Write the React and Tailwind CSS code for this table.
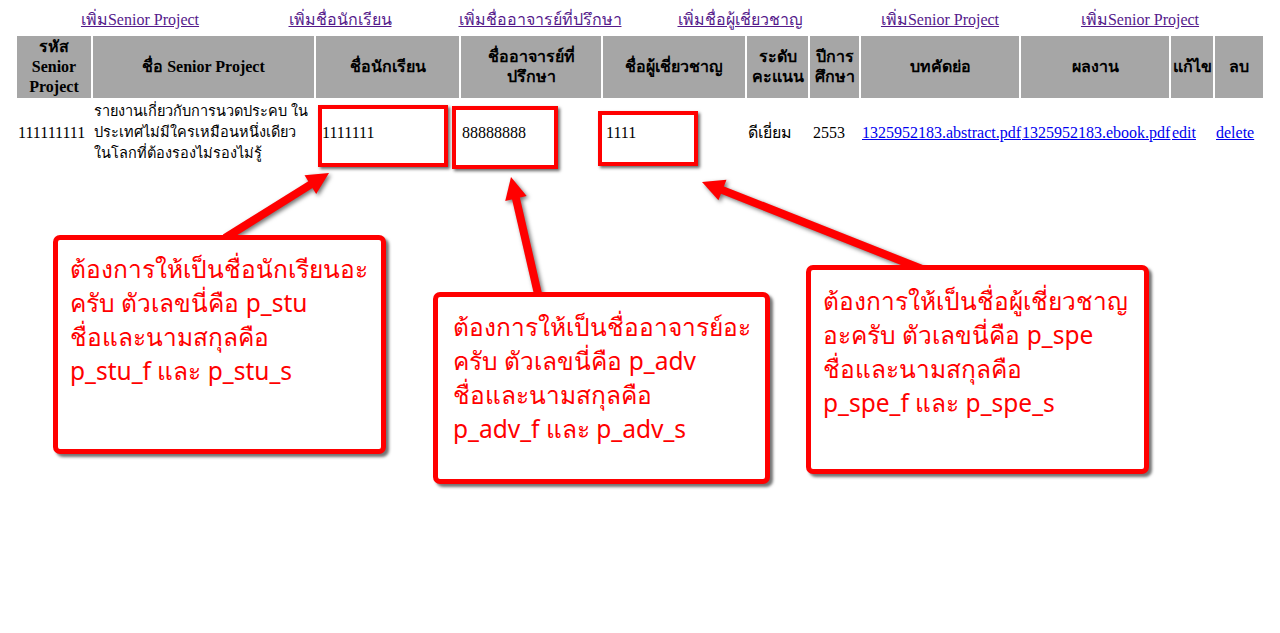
const topLinks = [
  "เพิ่มSenior Project",
  "เพิ่มชื่อนักเรียน",
  "เพิ่มชื่ออาจารย์ที่ปรึกษา",
  "เพิ่มชื่อผู้เชี่ยวชาญ",
  "เพิ่มSenior Project",
  "เพิ่มSenior Project",
];

const columns = [
  { w: "w-[74px]", label: ["รหัส", "Senior", "Project"] },
  { w: "w-[221px]", label: ["ชื่อ Senior Project"] },
  { w: "w-[143px]", label: ["ชื่อนักเรียน"] },
  { w: "w-[140px]", label: ["ชื่ออาจารย์ที่", "ปรึกษา"] },
  { w: "w-[142px]", label: ["ชื่อผู้เชี่ยวชาญ"] },
  { w: "w-[61px]", label: ["ระดับ", "คะแนน"] },
  { w: "w-[49px]", label: ["ปีการ", "ศึกษา"] },
  { w: "w-[158px]", label: ["บทคัดย่อ"] },
  { w: "w-[148px]", label: ["ผลงาน"] },
  { w: "w-[42px]", label: ["แก้ไข"] },
  { w: "w-[48px]", label: ["ลบ"] },
];

// annotation arrow: shaft + triangular head, tip at (x2, y2)
function Arrow({ x1, y1, x2, y2 }) {
  const dx = x2 - x1;
  const dy = y2 - y1;
  const len = Math.hypot(dx, dy);
  const ux = dx / len;
  const uy = dy / len;
  const px = -uy;
  const py = ux;
  const headLen = 22;
  const headW = 11;
  const bx = x2 - ux * headLen;
  const by = y2 - uy * headLen;
  const head = `${x2},${y2} ${bx + px * headW},${by + py * headW} ${bx - px * headW},${by - py * headW}`;
  return (
    <g>
      <line x1={x1} y1={y1} x2={bx + ux * 2} y2={by + uy * 2} stroke="#ff0000" strokeWidth="8" />
      <polygon points={head} fill="#ff0000" />
    </g>
  );
}

function Callout({ className, lines }) {
  return (
    <div className={`absolute rounded-[7px] border-[5px] border-[#ff0000] bg-white shadow-[3px_3px_3px_rgba(0,0,0,0.55)] ${className}`}>
      <div className="text-[24.5px] leading-[34px] text-[#ff0000] font-['Noto_Sans',sans-serif]">
        {lines.map((l, i) => (
          <div key={i} className="whitespace-nowrap">{l}</div>
        ))}
      </div>
    </div>
  );
}

export default function App() {
  return (
    <div className="relative w-[1280px] h-[633px] bg-white text-black text-[16px] font-['Liberation_Serif',serif] overflow-hidden">
      <div className="mx-auto w-[1200px] flex pt-[10px] h-[34px]">
        {topLinks.map((t, i) => (
          <div key={i} className="w-[200px] text-center leading-[20px]">
            <a href="#" className="underline text-[#551a8b]">{t}</a>
          </div>
        ))}
      </div>

      <table className="mx-auto table-fixed border-separate border-spacing-[2px] w-[1250px]">
        <thead>
          <tr>
            {columns.map((c, i) => (
              <th key={i} className={`${c.w} bg-[#a6a6a6] p-[1px] h-[62px] font-bold text-center align-middle leading-[20px]`}>
                {c.label.map((l, j) => (
                  <div key={j}>{l}</div>
                ))}
              </th>
            ))}
          </tr>
        </thead>
        <tbody className="leading-[21px]">
          <tr>
            <td className="p-[1px] pb-[4px] align-middle">111111111</td>
            <td className="p-[1px] pb-[4px] align-middle text-[14.5px] whitespace-nowrap">
              รายงานเกี่ยวกับการนวดประคบ ใน<br />
              ประเทศไม่มีใครเหมือนหนึ่งเดียว<br />
              ในโลกที่ต้องรองไม่รองไม่รู้
            </td>
            <td className="p-[1px] pb-[4px] pl-[6px] align-middle">1111111</td>
            <td className="p-[1px] pb-[4px] align-middle">88888888</td>
            <td className="p-[1px] pb-[4px] pl-[3px] align-middle">1111</td>
            <td className="p-[1px] pb-[4px] align-middle">ดีเยี่ยม</td>
            <td className="p-[1px] pb-[4px] pl-[3px] align-middle">2553</td>
            <td className="p-[1px] pb-[4px] align-middle"><a href="#" className="underline text-[#0000ee]">1325952183.abstract.pdf</a></td>
            <td className="p-[1px] pb-[4px] align-middle"><a href="#" className="underline text-[#0000ee]">1325952183.ebook.pdf</a></td>
            <td className="p-[1px] pb-[4px] align-middle"><a href="#" className="underline text-[#0000ee]">edit</a></td>
            <td className="p-[1px] pb-[4px] align-middle"><a href="#" className="underline text-[#0000ee]">delete</a></td>
          </tr>
        </tbody>
      </table>

      {/* highlight boxes over table cells */}
      <div className="absolute left-[318px] top-[105px] w-[130px] h-[62px] border-4 border-[#ff0000] shadow-[2px_2px_3px_rgba(0,0,0,0.6)]" />
      <div className="absolute left-[452px] top-[106px] w-[106px] h-[63px] border-4 border-[#ff0000] shadow-[2px_2px_3px_rgba(0,0,0,0.6)]" />
      <div className="absolute left-[598px] top-[111px] w-[100px] h-[55px] border-4 border-[#ff0000] shadow-[2px_2px_3px_rgba(0,0,0,0.6)]" />

      <svg className="absolute inset-0 pointer-events-none" width="1280" height="633" style={{ filter: "drop-shadow(2px 2px 2px rgba(0,0,0,0.55))" }}>
        <Arrow x1={225} y1={238} x2={329} y2={173} />
        <Arrow x1={538} y1={294} x2={511} y2={177} />
        <Arrow x1={922} y1={269} x2={702} y2={182} />
      </svg>

      <Callout
        className="left-[53px] top-[235px] w-[333px] h-[219px] pl-[12px] pt-[12px]"
        lines={["ต้องการให้เป็นชื่อนักเรียนอะ", "ครับ ตัวเลขนี่คือ p_stu", "ชื่อและนามสกุลคือ", "p_stu_f และ p_stu_s"]}
      />
      <Callout
        className="left-[433px] top-[292px] w-[337px] h-[192px] pl-[15px] pt-[13px]"
        lines={["ต้องการให้เป็นชื่ออาจารย์อะ", "ครับ ตัวเลขนี่คือ p_adv", "ชื่อและนามสกุลคือ", "p_adv_f และ p_adv_s"]}
      />
      <Callout
        className="left-[806px] top-[265px] w-[343px] h-[209px] pl-[12px] pt-[14px]"
        lines={["ต้องการให้เป็นชื่อผู้เชี่ยวชาญ", "อะครับ ตัวเลขนี่คือ p_spe", "ชื่อและนามสกุลคือ", "p_spe_f และ p_spe_s"]}
      />
    </div>
  );
}
